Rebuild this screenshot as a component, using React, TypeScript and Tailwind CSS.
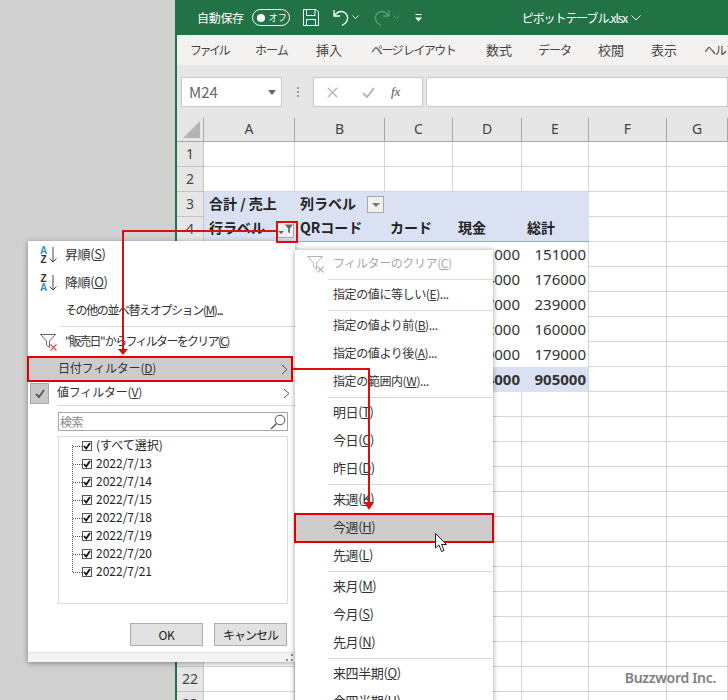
import type { ReactNode } from "react";

const jp = "font-['Noto_Sans_CJK_JP','Noto_Sans',sans-serif]";

const tabs = [
  { t: "ファイル", cls: "w-[65px] text-[12px] tracking-[-2.5px]" },
  { t: "ホーム", cls: "w-[61px] text-[12px] tracking-[-1px]" },
  { t: "挿入", cls: "w-[55px] text-[13px]" },
  { t: "ページ レイアウト", cls: "w-[115px] text-[12px] tracking-[-1.6px]" },
  { t: "数式", cls: "w-[52px] text-[13px]" },
  { t: "データ", cls: "w-[60px] text-[12px] tracking-[-1px]" },
  { t: "校閲", cls: "w-[53px] text-[13px]" },
  { t: "表示", cls: "w-[53px] text-[13px]" },
  { t: "ヘルプ", cls: "w-[40px] text-[12px] tracking-[-1px]" },
];
const cols = ["A", "B", "C", "D", "E", "F", "G"];
const rowNumbers = Array.from({ length: 23 }, (_, i) => i + 1);
const dates = ["2022/7/13", "2022/7/14", "2022/7/15", "2022/7/18", "2022/7/19", "2022/7/20", "2022/7/21"];

const pivot: Record<number, string[]> = {
  5: ["51000", "151000"],
  6: ["64000", "176000"],
  7: ["87000", "239000"],
  8: ["52000", "160000"],
  9: ["60000", "179000"],
  10: ["314000", "905000"],
};

const headerRow: Record<number, string[]> = {
  3: ["合計 / 売上", "列ラベル", "", "", ""],
  4: ["行ラベル", "QRコード", "カード", "現金", "総計"],
};

const dateMenu = [
  [{ t: "指定の値に等しい", k: "E", s: "..." }],
  [
    { t: "指定の値より前", k: "B", s: "..." },
    { t: "指定の値より後", k: "A", s: "..." },
    { t: "指定の範囲内", k: "W", s: "..." },
  ],
  [
    { t: "明日", k: "T", big: true },
    { t: "今日", k: "C", big: true },
    { t: "昨日", k: "D", big: true },
  ],
  [
    { t: "来週", k: "K", big: true },
    { t: "今週", k: "H", big: true, active: true },
    { t: "先週", k: "L", big: true },
  ],
  [
    { t: "来月", k: "M", big: true },
    { t: "今月", k: "S", big: true },
    { t: "先月", k: "N", big: true },
  ],
  [
    { t: "来四半期", k: "Q", big: true },
    { t: "今四半期", k: "U", big: true },
  ],
];

function Acc({ t, k, s = "" }: { t: string; k: string; s?: string }) {
  return (
    <span className="whitespace-nowrap -mt-[2px]">
      {t}(<span className="underline">{k}</span>){s}
    </span>
  );
}

function FilterIcon({ cross = "#d9534f", stroke = "#666" }: { cross?: string; stroke?: string }) {
  return (
    <svg width="18" height="17" viewBox="0 0 18 17" fill="none">
      <path d="M0.500 0.500H15.500L9.500 7V13.500L6.500 11V7Z" stroke={stroke} fill="white" />
      <path d="M10.500 10.500L16.500 16.500M16.500 10.500L10.500 16.500" stroke={cross} strokeWidth="1.300" />
    </svg>
  );
}

function Chevron() {
  return (
    <svg width="7" height="11" viewBox="0 0 7 11" fill="none" className="ml-auto mr-[5px]">
      <path d="M1 1L6 5.500L1 10" stroke="#555" strokeWidth="1" />
    </svg>
  );
}

function TitleBar() {
  return (
    <div className="h-[35px] bg-[#217346] text-white flex items-center shrink-0">
      <span className="ml-[20px] text-[12px] tracking-[-0.3px]">自動保存</span>
      <div className="ml-[8px] w-[38px] h-[17px] rounded-full border border-white flex items-center pl-[4px] gap-[4px]">
        <span className="w-[8px] h-[8px] rounded-full bg-white" />
        <span className="text-[9px] leading-none">オフ</span>
      </div>
      <svg className="ml-[13px]" width="16" height="17" viewBox="0 0 16 17" fill="none" stroke="white">
        <path d="M0.500 0.500H13L15.500 3V16.500H0.500Z" />
        <path d="M3.500 0.500V6.500H12V0.500M3.500 16.500V10.500H12.500V16.500" />
      </svg>
      <svg className="ml-[14px]" width="16" height="17" viewBox="0 0 16 17" fill="none" stroke="white" strokeWidth="1.300">
        <path d="M1 1V7H7M1 7C4 3 8 1.500 11.500 3.500C15.500 6 15.500 11 12.500 14L9 16.500" />
      </svg>
      <svg className="ml-[3px]" width="7" height="5" viewBox="0 0 7 5" fill="none" stroke="white">
        <path d="M0.500 0.500L3.500 3.500L6.500 0.500" />
      </svg>
      <svg className="ml-[15px]" width="16" height="17" viewBox="0 0 16 17" fill="none" stroke="#5e9a7b" strokeWidth="1.300">
        <path d="M15 1V7H9M15 7C12 3 8 1.500 4.500 3.500C0.500 6 0.500 11 3.500 14L7 16.500" />
      </svg>
      <svg className="ml-[3px]" width="7" height="5" viewBox="0 0 7 5" fill="none" stroke="#5e9a7b">
        <path d="M0.500 0.500L3.500 3.500L6.500 0.500" />
      </svg>
      <svg className="ml-[15px]" width="7" height="8" viewBox="0 0 7 8" fill="white">
        <rect x="0.500" y="0" width="6" height="1" />
        <path d="M0 3.500H7L3.500 7.500Z" />
      </svg>
      <span className="ml-[100px] text-[12px] tracking-[-1.100px]">ピボットテーブル.xlsx</span>
      <svg className="ml-[4px]" width="10" height="6" viewBox="0 0 10 6" fill="none" stroke="white">
        <path d="M0.500 0.500L5 5L9.500 0.500" />
      </svg>
    </div>
  );
}

function FormulaBar() {
  return (
    <div className="h-[53px] bg-[#e6e6e6] flex items-start pt-[12px] pl-[4px] shrink-0">
      <div className="w-[101px] h-[30px] bg-white border border-[#c8c8c8] flex items-center pl-[7px] text-[15px] text-[#666]">
        M24
        <span className="ml-auto mr-[5px] w-0 h-0 border-x-[4px] border-x-transparent border-t-[5px] border-t-[#666]" />
      </div>
      <div className="w-[31px] h-[30px] flex flex-col items-center justify-center gap-[2px]">
        <span className="w-[2px] h-[2px] bg-[#999]" />
        <span className="w-[2px] h-[2px] bg-[#999]" />
        <span className="w-[2px] h-[2px] bg-[#999]" />
      </div>
      <div className="w-[110px] h-[30px] bg-white border border-[#c8c8c8] flex items-center">
        <svg className="ml-[13px]" width="11" height="11" viewBox="0 0 11 11" stroke="#b8b8b8" strokeWidth="1.500">
          <path d="M1 1L10 10M10 1L1 10" />
        </svg>
        <svg className="ml-[24px]" width="13" height="11" viewBox="0 0 13 11" fill="none" stroke="#b8b8b8" strokeWidth="2">
          <path d="M1 6L5 10L12 1" />
        </svg>
        <span className="ml-[16px] font-['Liberation_Serif',serif] italic text-[13px] text-[#555]">fx</span>
      </div>
      <div className="ml-[3px] grow h-[30px] bg-white border border-[#c8c8c8]" />
    </div>
  );
}

function Dropdown({ filtered }: { filtered?: boolean }) {
  return (
    <span className="w-[17px] h-[17px] shrink-0 bg-[#f0f0f0] border border-[#a8a8a8] flex items-center justify-center gap-px">
      {filtered ? (
        <>
          <span className="w-0 h-0 mt-[6px] border-x-[3px] border-x-transparent border-t-[3px] border-t-[#666]" />
          <svg width="9" height="10" viewBox="0 0 9 10" fill="#666">
            <path d="M0 0H9L5.500 4.500V10L3.500 8.500V4.500Z" />
          </svg>
        </>
      ) : (
        <span className="w-0 h-0 border-x-[4px] border-x-transparent border-t-[4px] border-t-[#777]" />
      )}
    </span>
  );
}

function Cell({ row, col }: { row: number; col: number }) {
  let cls = "border-r border-b border-[#d4d4d4]";
  let body: ReactNode = null;
  if (row === 3 || row === 4) {
    cls = col < 5 ? "bg-[#d9e1f2]" : cls;
    if (row === 4 && col < 5) cls += " border-b border-[#8ea9db]";
    if (col < 5 && headerRow[row][col]) {
      body = (
        <div className="flex items-center justify-between h-full pl-[5px] pr-px font-bold text-[14px] text-[#222] whitespace-nowrap">
          <span className="-mt-[3px]">{headerRow[row][col]}</span>
          {row === 3 && col === 1 && <Dropdown />}
          {row === 4 && col === 0 && <Dropdown filtered />}
        </div>
      );
    }
  } else if (pivot[row] && col < 5) {
    const total = row === 10;
    cls = total ? "bg-[#d9e1f2]" : "bg-white";
    if (col === 4) cls += " border-r border-[#d4d4d4]";
    if (col >= 3) {
      body = (
        <div className={`flex items-center justify-end h-full pr-[2px] text-[15px] text-[#333] font-['Noto_Sans',sans-serif] ${total ? "font-bold" : ""}`}>
          {pivot[row][col - 3]}
        </div>
      );
    }
  }
  return <div className={`h-[25px] overflow-hidden ${cls}`}>{body}</div>;
}

function Sheet() {
  return (
    <div className="grid grid-cols-[27px_91px_90px_68px_69px_67px_78px_1fr] bg-white">
      <div className="h-[24px] bg-[#e6e6e6] border-b border-r border-[#a8a8a8] flex items-end justify-end p-[3px]">
        <span className="w-0 h-0 border-l-[17px] border-l-transparent border-b-[17px] border-b-[#b4b4b4]" />
      </div>
      {cols.map((c) => (
        <div key={c} className="h-[24px] pb-[2px] bg-[#e6e6e6] border-b border-r border-[#a8a8a8] flex items-center justify-center text-[14px] text-[#444] font-['Noto_Sans',sans-serif]">
          {c}
        </div>
      ))}
      {rowNumbers.map((r) => (
        <div key={r} className="contents">
          <div className="h-[25px] pb-px bg-[#e6e6e6] border-b border-r border-[#c4c4c4] flex items-center justify-center text-[14px] text-[#444] font-['Noto_Sans',sans-serif]">
            {r}
          </div>
          {cols.map((_, i) => (
            <Cell key={i} row={r} col={i} />
          ))}
        </div>
      ))}
    </div>
  );
}

function SortIcon({ top, bottom }: { top: string; bottom: string }) {
  const tone = (l: string) => (l === "A" ? "text-[#2e8fc8]" : "text-[#333]");
  return (
    <div className="w-[17px] flex items-center">
      <div className="flex flex-col items-center text-[10px] leading-[9px] font-bold font-['Liberation_Sans',sans-serif]">
        <span className={tone(top)}>{top}</span>
        <span className={tone(bottom)}>{bottom}</span>
      </div>
      <svg className="ml-[2px]" width="8" height="16" viewBox="0 0 8 16" fill="none" stroke="#444">
        <path d="M4 0V15M0.500 11.500L4 15L7.500 11.500" />
      </svg>
    </div>
  );
}

function Checkbox() {
  return (
    <span className="w-[10px] h-[10px] border border-[#555] bg-white flex items-center justify-center shrink-0">
      <svg width="8" height="8" viewBox="0 0 8 8" fill="none" stroke="#111" strokeWidth="1.800">
        <path d="M1 4L3.200 6.500L7 1" />
      </svg>
    </span>
  );
}

function FilterMenu() {
  return (
    <div className={`absolute left-[28px] top-[241px] w-[267px] h-[421px] bg-white shadow-[0_1px_5px_rgba(0,0,0,0.4)] flex flex-col text-[12px] text-[#333] tracking-[-0.4px] ${jp}`}>
      <div className="h-[28px] flex items-center pl-[12px] text-[13px]">
        <SortIcon top="A" bottom="Z" />
        <span className="ml-[8px] flex"><Acc t="昇順" k="S" /></span>
      </div>
      <div className="h-[28px] flex items-center pl-[12px] text-[13px]">
        <SortIcon top="Z" bottom="A" />
        <span className="ml-[8px] flex"><Acc t="降順" k="O" /></span>
      </div>
      <div className="h-[28px] flex items-center pl-[37px] tracking-[-1.4px]">
        <Acc t="その他の並べ替えオプション" k="M" s="..." />
      </div>
      <div className="h-[3px] flex items-center">
        <div className="h-px grow ml-[32px] bg-[#d9d9d9]" />
      </div>
      <div className="h-[28px] flex items-center pl-[12px] gap-[7px] tracking-[-1.700px]">
        <FilterIcon />
        <Acc t={'"販売日" からフィルターをクリア'} k="C" />
      </div>
      <div className="h-[26px] -ml-px mr-[2px] flex items-center pl-[31px] bg-[#cdcbcb] outline-2 -outline-offset-2 outline-[#e00000] tracking-[-0.2px]">
        <Acc t="日付フィルター" k="D" />
        <Chevron />
      </div>
      <div className="h-[22px] flex items-center tracking-[-0.2px]">
        <span className="ml-[2px] w-[19px] h-[21px] bg-[#c8c8c8] border border-[#aaa] flex items-center justify-center">
          <svg width="10" height="9" viewBox="0 0 10 9" fill="none" stroke="#555" strokeWidth="1.800">
            <path d="M1 5L4 8L9 1" />
          </svg>
        </span>
        <span className="ml-[8px] flex"><Acc t="値フィルター" k="V" /></span>
        <Chevron />
      </div>
      <div className="h-[3px] flex items-center">
        <div className="h-px grow ml-[30px] bg-[#d9d9d9]" />
      </div>
      <div className="mt-[5px] ml-[30px] w-[230px] h-[19px] border border-[#a8a8a8] flex items-center pl-[1px] text-[#8a8a8a]">
        検索
        <svg className="ml-auto mr-[1px]" width="16" height="16" viewBox="0 0 16 16" fill="none" stroke="#555">
          <circle cx="10" cy="6" r="4.800" />
          <path d="M6.500 9.500L1 15" strokeWidth="1.500" />
        </svg>
      </div>
      <div className="relative mt-[5px] ml-[30px] w-[230px] h-[168px] border border-[#dcdcdc] text-[#222] tracking-normal">
        <span className="absolute left-[13px] top-[8px] h-[127px] border-l border-dotted border-[#555]" />
        {[null, ...dates].map((d) => (
          <div key={d ?? "all"} className="h-[18px] flex items-center pl-[14px]">
            <span className="w-[9px] border-t border-dotted border-[#555]" />
            <Checkbox />
            <span className="ml-[4px] -mt-[2px]">{d ?? "(すべて選択)"}</span>
          </div>
        ))}
      </div>
      <div className="mt-[19px] flex gap-[11px] justify-end pr-[8px]">
        <button className="w-[73px] h-[23px] bg-[#e1e1e1] border border-[#adadad] text-[#222]">OK</button>
        <button className="w-[73px] h-[23px] bg-[#e1e1e1] border border-[#adadad] text-[#222] tracking-[-1px]">キャンセル</button>
      </div>
      <div className="mt-auto h-[10px] border-t border-[#e3e3e3] bg-[#f3f3f3] flex justify-end items-end pr-[2px] pb-[1px]">
        <svg width="7" height="7" viewBox="0 0 7 7" fill="#888">
          <rect x="5" y="0" width="2" height="2" />
          <rect x="0" y="5" width="2" height="2" />
          <rect x="5" y="5" width="2" height="2" />
        </svg>
      </div>
    </div>
  );
}

function DateMenu() {
  return (
    <div className={`absolute left-[295px] top-[249px] w-[198px] h-[470px] bg-white border-t border-[#d8d8d8] shadow-[0_1px_5px_rgba(0,0,0,0.4)] flex flex-col text-[12px] text-[#333] tracking-[-0.4px] ${jp}`}>
      <div className="h-[28px] flex items-center pl-[12px] gap-[8px] text-[#a8a8a8]">
        <FilterIcon cross="#b5b5b5" stroke="#b5b5b5" />
        <Acc t="フィルターのクリア" k="C" />
      </div>
      {dateMenu.map((group, i) => (
        <div key={i}>
          <div className="h-[3px] flex items-center">
            <div className="h-px grow ml-[33px] bg-[#d9d9d9]" />
          </div>
          {group.map((item) => (
            <div
              key={item.t}
              className={`h-[28px] flex items-center pl-[38px] ${"big" in item ? "text-[13px]" : ""} ${
                "active" in item ? "bg-[#cdcbcb] outline-2 -outline-offset-1 outline-[#e00000]" : ""
              }`}
            >
              <Acc t={item.t} k={item.k} s={"s" in item ? item.s : ""} />
            </div>
          ))}
        </div>
      ))}
    </div>
  );
}

export default function App() {
  return (
    <div className="relative w-[728px] h-[700px] overflow-hidden bg-[#d0d0d0] pl-[175px]">
      <div className={`h-full flex flex-col border-l-2 border-[#217346] bg-white overflow-hidden ${jp}`}>
        <TitleBar />
        <div className="h-[30px] bg-[#f3f2f1] flex items-center pl-[13px] text-[#444] whitespace-nowrap shrink-0">
          {tabs.map((tab) => (
            <span key={tab.t} className={`shrink-0 ${tab.cls}`}>
              {tab.t}
            </span>
          ))}
        </div>
        <FormulaBar />
        <Sheet />
      </div>

      <FilterMenu />
      <DateMenu />

      <span className="absolute left-[276px] top-[221px] w-[22px] h-[22px] border-2 border-[#d81010]" />

      <svg className="absolute inset-0 pointer-events-none" width="728" height="700" fill="none">
        <path d="M276 231H123V352" stroke="#d81010" strokeWidth="2" />
        <path d="M118 349H128L123 355Z" fill="#d81010" />
        <path d="M293 369H369V505" stroke="#d81010" strokeWidth="2" />
        <path d="M364 502H374L369 510Z" fill="#d81010" />
        <path d="M435.500 533.500V548L439 545L441.500 551.500L444 550.500L441.500 544.500L446.500 544.500Z" fill="white" stroke="#222" />
      </svg>

      <span className="absolute right-[12px] top-[667px] text-[14px] font-semibold tracking-[-0.3px] text-[#808080] font-['Noto_Sans',sans-serif]">
        Buzzword Inc.
      </span>
    </div>
  );
}
